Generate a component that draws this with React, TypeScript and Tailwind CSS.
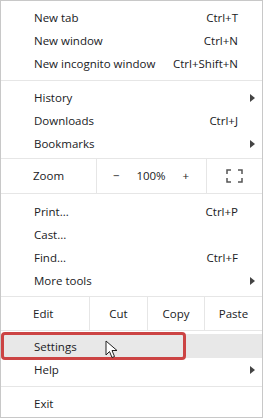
const font = { fontFamily: '"Segoe UI", "Open Sans", "Liberation Sans", sans-serif' }

function Arrow() {
  return (
    <svg width="5" height="8" viewBox="0 0 5 8" className="absolute right-[7px] top-1/2 -translate-y-1/2">
      <path d="M0 0 L5 4 L0 8 Z" fill="#444" />
    </svg>
  )
}

function Item({ label, shortcut, sub, className = '' }: { label: string; shortcut?: string; sub?: boolean; className?: string }) {
  return (
    <div className={`relative flex h-[23px] items-center pl-[33px] pr-[24px] ${className}`}>
      <span className="flex-1">{label}</span>
      {shortcut && <span>{shortcut}</span>}
      {sub && <Arrow />}
    </div>
  )
}

function Sep() {
  return <div className="my-[5px] h-px bg-[#e6e6e6]" />
}

export default function App() {
  return (
    <div className="h-[419px] w-[264px] bg-white" style={font}>
      <div className="h-[418px] w-[263px] border border-[#c8c8c8] bg-white pt-[5px] text-[11.5px] text-[#202124]">
        <Item label="New tab" shortcut="Ctrl+T" />
        <Item label="New window" shortcut="Ctrl+N" />
        <Item label="New incognito window" shortcut="Ctrl+Shift+N" />
        <Sep />
        <Item label="History" sub />
        <Item label="Downloads" shortcut="Ctrl+J" />
        <Item label="Bookmarks" sub />
        <div className="mt-[3px] flex h-[36px] items-stretch border-y border-[#e6e6e6]">
          <div className="flex w-[95px] items-center pl-[32px]">Zoom</div>
          <div className="flex w-[111px] items-center justify-between border-x border-[#e6e6e6] pl-[16px] pr-[17px]">
            <span>−</span>
            <span>100%</span>
            <span>+</span>
          </div>
          <div className="flex flex-1 items-center justify-center">
            <svg width="17" height="14" viewBox="0 0 17 14" fill="none" stroke="#555" strokeWidth="1.5">
              <path d="M1 5V1H5M12 1H16V5M16 9V13H12M5 13H1V9" />
            </svg>
          </div>
        </div>
        <div className="h-[6px]" />
        <Item label="Print..." shortcut="Ctrl+P" />
        <Item label="Cast..." />
        <Item label="Find..." shortcut="Ctrl+F" />
        <Item label="More tools" sub />
        <div className="mt-[4px] flex h-[35px] items-stretch border-y border-[#e6e6e6]">
          <div className="flex w-[88px] items-center pl-[32px]">Edit</div>
          <div className="flex w-[58px] items-center justify-center border-l border-[#e6e6e6]">Cut</div>
          <div className="flex w-[58px] items-center justify-center border-x border-[#e6e6e6]">Copy</div>
          <div className="flex flex-1 items-center justify-center">Paste</div>
        </div>
        <div className="relative pt-[3px]">
          <Item label="Settings" className="h-[24px] bg-[#e8e8e8] pt-[2px]" />
          <div className="pointer-events-none absolute left-0 top-[1px] h-[28px] w-[185px] rounded-[4px] border-[3px] border-[#cc4444]" />
          <svg width="13" height="20" viewBox="0 0 13 20" className="absolute left-[104px] top-[9px]">
            <path d="M1 1 L1 15 L4.5 11.5 L7 17.5 L9.5 16.5 L7 10.5 L12 10.5 Z" fill="#fff" stroke="#222" strokeWidth="1" strokeLinejoin="round" />
          </svg>
        </div>
        <Item label="Help" sub />
        <Sep />
        <Item label="Exit" />
      </div>
    </div>
  )
}
